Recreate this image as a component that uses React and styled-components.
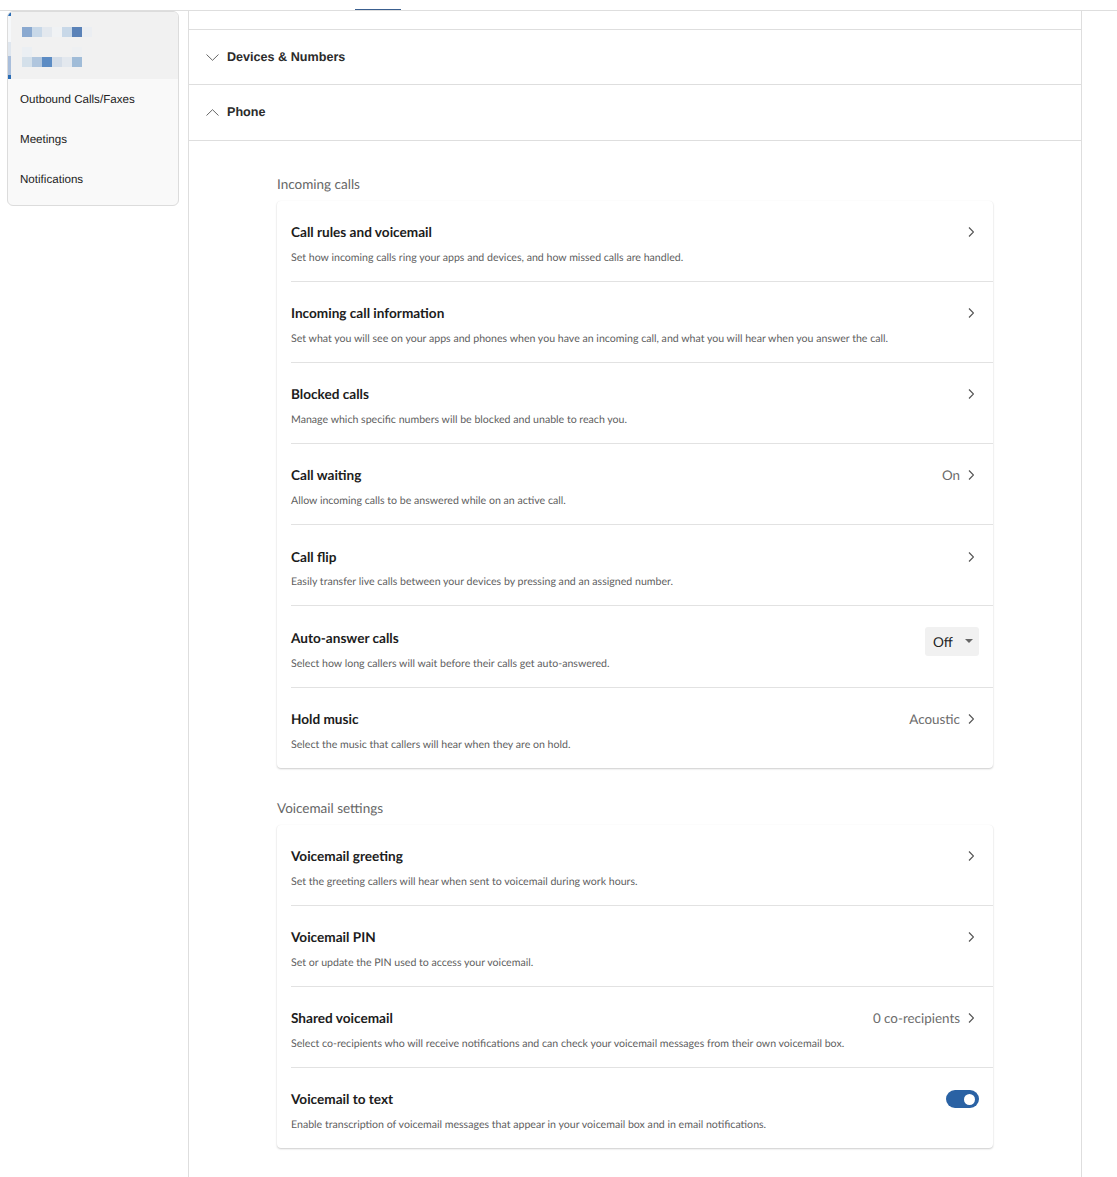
import React from "react";
import styled, { createGlobalStyle } from "styled-components";

const GlobalStyle = createGlobalStyle`
  html, body {
    margin: 0;
    padding: 0;
    background: #fff;
    height: 1177px;
    overflow: hidden;
    text-rendering: geometricPrecision;
  }
  * {
    box-sizing: border-box;
  }
`;

const TopBar = styled.div`
  height: 11px;
  border-bottom: 1px solid #dedede;
  padding-left: 355px;
`;
const ActiveTab = styled.div`
  width: 46px;
  height: 10px;
  border-bottom: 1px solid #3a5f8f;
`;
const Page = styled.div`
  display: flex;
  align-items: flex-start;
  padding-left: 7px;
  height: 1166px;
`;

const Sidebar = styled.nav`
  width: 172px;
  height: 195px;
  flex-shrink: 0;
  overflow: hidden;
  background: #f9f9f9;
  border: 1px solid #dcdcdc;
  border-radius: 6px;
  font-family: "Liberation Sans", Arial, sans-serif;
  font-size: 11.6px;
  color: #222;
`;
const SelectedItem = styled.div`
  height: 67px;
  background: #f1f1f1;
  display: flex;
`;
const SelectedBar = styled.div`
  width: 3px;
  height: 67px;
  background: linear-gradient(#2a6cb4 0 4px, #f6f8fa 4px 30px, #dfe6ee 30px 44px, #a9bedb 44px 63px, #2a6cb4 63px);
`;
const Mosaic = styled.div`
  display: grid;
  grid-template-columns: repeat(7, 10px);
  grid-auto-rows: 10px;
  margin: 15px 0 0 11px;
`;
const MosaicCell = styled.div`
  background: ${props => props.color};
`;
const NavItem = styled.div`
  height: 40px;
  display: flex;
  align-items: center;
  padding-left: 12px;
`;

const Main = styled.main`
  width: 894px;
  height: 1166px;
  margin-left: 9px;
  border-left: 1px solid #dedede;
  border-right: 1px solid #dedede;
  flex-shrink: 0;
`;
const TopGap = styled.div`
  height: 19px;
  border-bottom: 1px solid #dedede;
`;
const AccordionHeader = styled.div`
  height: ${props => props.height}px;
  display: flex;
  align-items: center;
  gap: 8px;
  padding: 0 0 ${props => (props.open ? 1 : 0)}px 17px;
  border-bottom: 1px solid #dedede;
  font-family: "Liberation Sans", Arial, sans-serif;
  font-size: 12.6px;
  font-weight: 700;
  color: #2b2b2b;
`;
const Content = styled.div`
  padding: 35px 88px 0;
  font-family: Lato, sans-serif;
`;
const SectionLabel = styled.div`
  height: 25px;
  font-size: 13.5px;
  line-height: 17px;
  color: #666;
`;
const Card = styled.section`
  background: #fff;
  border-radius: 4px;
  box-shadow: 0 1px 2px rgba(0, 0, 0, 0.2), 0 0 1px rgba(0, 0, 0, 0.06);
  padding-left: 14px;
  margin-bottom: 32px;
`;
const Row = styled.div`
  height: ${props => props.height || 81}px;
  padding: ${props => props.pad || 20}px 14px 0 0;
  border-bottom: ${props => (props.last ? "none" : "1px solid #e2e2e2")};
`;
const RowTop = styled.div`
  display: flex;
  align-items: center;
  justify-content: space-between;
  height: 22px;
`;
const RowTitle = styled.div`
  font-size: 13.6px;
  font-weight: 700;
  color: #1c1c1c;
`;
const RowDescription = styled.div`
  margin-top: ${props => props.gap || 8}px;
  font-size: 10.6px;
  line-height: 14px;
  color: #5f5f5f;
`;
const RowAction = styled.div`
  display: flex;
  align-items: center;
  gap: 8px;
  padding-right: 5px;
  font-size: 13.4px;
  color: #6b6b6b;
`;
const Select = styled.div`
  width: 54px;
  height: 29px;
  margin-top: 6px;
  display: flex;
  align-items: center;
  justify-content: space-between;
  padding: 2px 6px 0 8px;
  background: #f1f1f1;
  border-radius: 3px;
  font-size: 13.6px;
  color: #222;
`;
const Caret = styled.span`
  width: 0;
  height: 0;
  margin-top: -2px;
  border-left: 4px solid transparent;
  border-right: 4px solid transparent;
  border-top: 4px solid #666;
`;
const Toggle = styled.div`
  width: 33px;
  height: 18px;
  display: flex;
  align-items: center;
  justify-content: flex-end;
  padding-right: 4px;
  background: #2a62a4;
  border-radius: 9px;
`;
const Knob = styled.span`
  width: 11px;
  height: 11px;
  border-radius: 50%;
  background: #fff;
`;

const ChevronRight = () => (
  <svg width="6" height="10" viewBox="0 0 6 10" fill="none" stroke="#555" strokeWidth="1.2">
    <path d="M1 0.5 5.5 5 1 9.5" />
  </svg>
);
const AccordionChevron = ({ up }) => (
  <svg width="13" height="7" viewBox="0 0 13 7" fill="none" stroke="#555" strokeWidth="0.9">
    <path d={up ? "M0.5 6.5 6.5 0.7 12.5 6.5" : "M0.5 0.5 6.5 6.3 12.5 0.5"} />
  </svg>
);

const mosaicCells = [
  "#8aa9d0", "#c8d8e8", "#e3e8ee", "#f0f2f4", "#c8d8e8", "#5a82b8", "#ebeef2",
  "#f1f1f1", "#f1f1f1", "#f1f1f1", "#f1f1f1", "#f1f1f1", "#f1f1f1", "#f1f1f1",
  "#ebeff3", "#f1f1f1", "#f1f1f1", "#f1f1f1", "#f1f1f1", "#eef0f2", "#f1f1f1",
  "#d4e0ea", "#b0c6de", "#5c8cc4", "#d4dde8", "#e3e8ee", "#a0bcd8", "#f1f1f1"
];

const incomingCalls = [
  { title: "Call rules and voicemail", text: "Set how incoming calls ring your apps and devices, and how missed calls are handled." },
  { title: "Incoming call information", text: "Set what you will see on your apps and phones when you have an incoming call, and what you will hear when you answer the call." },
  { title: "Blocked calls", text: "Manage which specific numbers will be blocked and unable to reach you." },
  { title: "Call waiting", text: "Allow incoming calls to be answered while on an active call.", value: "On" },
  { title: "Call flip", text: "Easily transfer live calls between your devices by pressing and an assigned number.", pad: 21, gap: 7 },
  { title: "Auto-answer calls", text: "Select how long callers will wait before their calls get auto-answered.", kind: "select", height: 82, pad: 21 },
  { title: "Hold music", text: "Select the music that callers will hear when they are on hold.", value: "Acoustic", height: 80 }
];

const voicemailSettings = [
  { title: "Voicemail greeting", text: "Set the greeting callers will hear when sent to voicemail during work hours." },
  { title: "Voicemail PIN", text: "Set or update the PIN used to access your voicemail." },
  { title: "Shared voicemail", text: "Select co-recipients who will receive notifications and can check your voicemail messages from their own voicemail box.", value: "0 co-recipients" },
  { title: "Voicemail to text", text: "Enable transcription of voicemail messages that appear in your voicemail box and in email notifications.", kind: "toggle", height: 80 }
];

const SettingAction = ({ kind, value }) => {
  if (kind === "select") {
    return (
      <Select>
        Off
        <Caret />
      </Select>
    );
  }
  if (kind === "toggle") {
    return (
      <Toggle>
        <Knob />
      </Toggle>
    );
  }
  return (
    <RowAction>
      {value}
      <ChevronRight />
    </RowAction>
  );
};

const SettingsCard = ({ rows }) => (
  <Card>
    {rows.map((r, index) => (
      <Row key={r.title} last={index === rows.length - 1} height={r.height} pad={r.pad}>
        <RowTop>
          <RowTitle>{r.title}</RowTitle>
          <SettingAction kind={r.kind} value={r.value} />
        </RowTop>
        <RowDescription gap={r.gap}>{r.text}</RowDescription>
      </Row>
    ))}
  </Card>
);

export default function App() {
  return (
    <>
      <GlobalStyle />
      <TopBar>
        <ActiveTab />
      </TopBar>
      <Page>
        <Sidebar>
          <SelectedItem>
            <SelectedBar />
            <Mosaic>
              {mosaicCells.map((c, index) => (
                <MosaicCell key={index} color={c} />
              ))}
            </Mosaic>
          </SelectedItem>
          <NavItem>Outbound Calls/Faxes</NavItem>
          <NavItem>Meetings</NavItem>
          <NavItem>Notifications</NavItem>
        </Sidebar>
        <Main>
          <TopGap />
          <AccordionHeader height={55}>
            <AccordionChevron />
            Devices &amp; Numbers
          </AccordionHeader>
          <AccordionHeader height={56} open>
            <AccordionChevron up />
            Phone
          </AccordionHeader>
          <Content>
            <SectionLabel>Incoming calls</SectionLabel>
            <SettingsCard rows={incomingCalls} />
            <SectionLabel>Voicemail settings</SectionLabel>
            <SettingsCard rows={voicemailSettings} />
          </Content>
        </Main>
      </Page>
    </>
  );
}
